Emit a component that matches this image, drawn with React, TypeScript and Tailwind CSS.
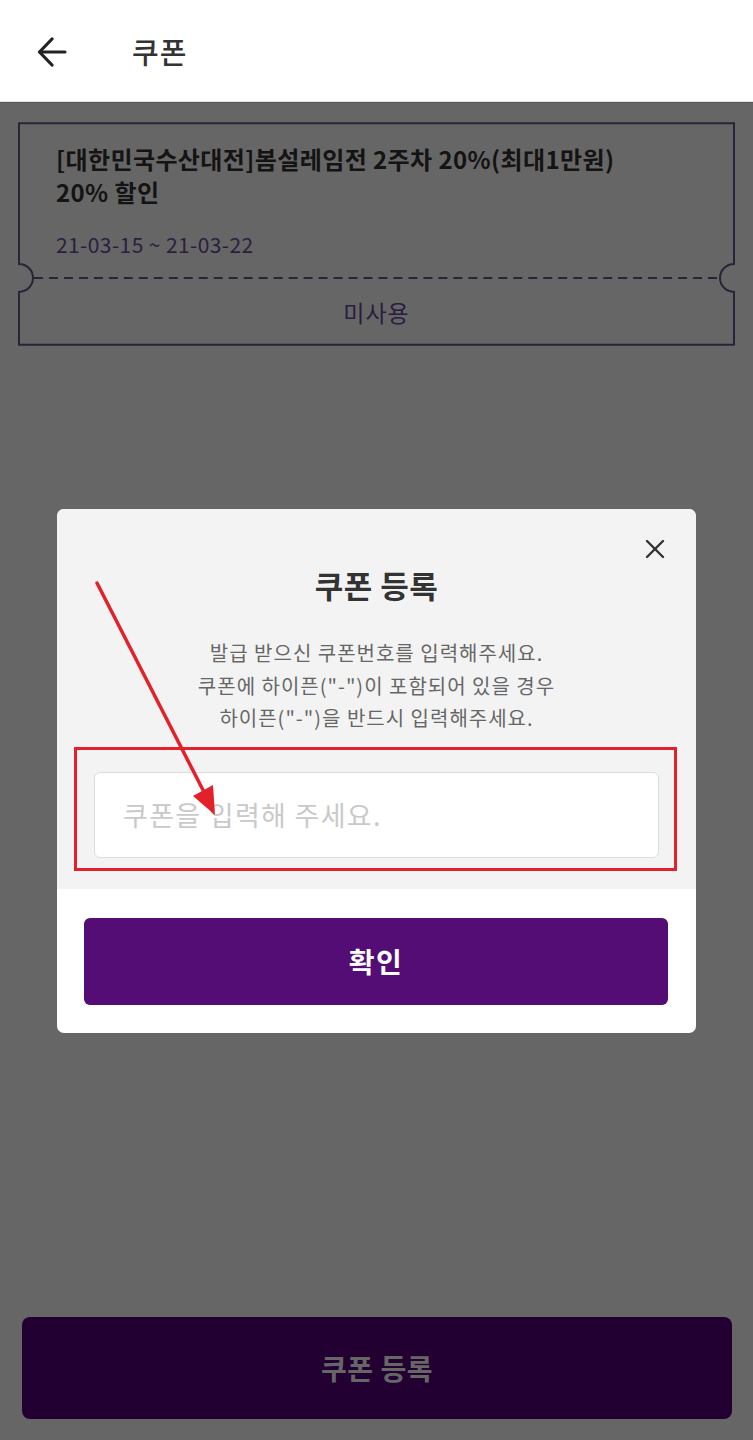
import { X } from 'lucide-react';

const font = { fontFamily: '"Noto Sans CJK KR", "Noto Sans", sans-serif' };

function TicketOutline() {
  // ticket shape with a half-round notch on each side at the tear line
  return (
    <svg
      className="absolute inset-0 h-full w-full"
      viewBox="0 0 718 224"
      fill="none"
      stroke="#655a8e"
      strokeWidth={2}
    >
      <path d="M1 1 H717 V142 A14 14 0 0 0 717 170 V223 H1 V170 A14 14 0 0 0 1 142 Z" />
      <line x1="16" y1="156" x2="702" y2="156" strokeDasharray="9 6" />
    </svg>
  );
}

function CouponCard() {
  return (
    <div className="relative mx-[18px] mt-[19px] h-[224px]">
      <TicketOutline />
      <div className="relative flex h-[156px] flex-col px-[38px] pt-[20px]">
        <p className="text-[24px] font-bold leading-[33px] tracking-[0.4px] text-[#333]">
          [대한민국수산대전]봄설레임전 2주차 20%(최대1만원)
          <br />
          20% 할인
        </p>
        <p className="mt-[23px] text-[21px] leading-[26px] tracking-[0.4px] text-[#6e4f9c]">21-03-15 ~ 21-03-22</p>
      </div>
      <div className="relative flex h-[68px] items-center justify-center text-[23px] tracking-[1px] text-[#6a4c98]">
        미사용
      </div>
    </div>
  );
}

function AnnotationArrow() {
  return (
    <svg className="pointer-events-none absolute left-0 top-0 h-[330px] w-[200px]" viewBox="0 0 200 330">
      <line x1="40" y1="74" x2="147" y2="283" stroke="#e3212b" strokeWidth={3.5} strokeLinecap="round" />
      <polygon points="158,306 136,287 156,276" fill="#e3212b" />
    </svg>
  );
}

function CouponModal() {
  return (
    <div className="relative w-[639px] overflow-hidden rounded-[7px] bg-white">
      <div className="relative flex flex-col items-center bg-[#f3f3f3] px-[37px] pb-[31px] pt-[56px]">
        <button className="absolute right-[25px] top-[24px] text-[#333]">
          <X size={32} strokeWidth={1.8} />
        </button>
        <h2 className="text-[31px] font-bold leading-[40px] tracking-[0.5px] text-[#333]">쿠폰 등록</h2>
        <p className="mt-[32px] text-center text-[20px] leading-[32.5px] tracking-[1px] text-[#666]">
          발급 받으신 쿠폰번호를 입력해주세요.
          <br />
          쿠폰에 하이픈(&quot;-&quot;)이 포함되어 있을 경우
          <br />
          하이픈(&quot;-&quot;)을 반드시 입력해주세요.
        </p>
        <input
          className="mt-[37px] h-[86px] w-full rounded-[6px] border border-[#dcdcdc] bg-white px-[28px] text-[27px] tracking-[1.3px] text-[#333] outline-none placeholder:text-[#c9c9c9]"
          style={font}
          placeholder="쿠폰을 입력해 주세요."
        />
      </div>
      <div className="px-[27px] pb-[28px] pt-[29px] pr-[28px]">
        <button className="flex h-[87px] w-full items-center justify-center rounded-[6px] bg-[#540d74] text-[28px] font-bold tracking-[1.5px] text-white">
          확인
        </button>
      </div>
      {/* red annotation overlay */}
      <div className="pointer-events-none absolute left-[17px] top-[238px] h-[124px] w-[603px] border-[3px] border-[#e3212b]" />
      <AnnotationArrow />
    </div>
  );
}

export default function App() {
  return (
    <div className="relative flex h-[1440px] w-full flex-col overflow-hidden bg-white" style={font}>
      <header className="flex h-[103px] shrink-0 items-center border-b-2 border-[#e2e2e2] bg-white pt-[3px]">
        <svg className="ml-[37px] h-[30px] w-[30px]" viewBox="0 0 30 30" fill="none" stroke="#222" strokeWidth={3.2} strokeLinecap="round" strokeLinejoin="round">
          <path d="M28 15 H3" />
          <path d="M15 2 L2.5 15 L15 28" />
        </svg>
        <h1 className="ml-[65px] text-[29px] font-medium tracking-[1px] text-[#333]">쿠폰</h1>
      </header>

      <main className="flex-1">
        <CouponCard />
      </main>

      <div className="px-[22px] pb-[21px] pr-[21px]">
        <button className="flex h-[102px] w-full items-center justify-center rounded-[8px] bg-[#55007a] text-[28px] font-bold tracking-[0.5px] text-white">
          쿠폰 등록
        </button>
      </div>

      {/* dimmed backdrop under the modal */}
      <div className="absolute inset-x-0 bottom-0 top-[102px] flex items-center justify-center bg-black/60">
        <CouponModal />
      </div>
    </div>
  );
}
